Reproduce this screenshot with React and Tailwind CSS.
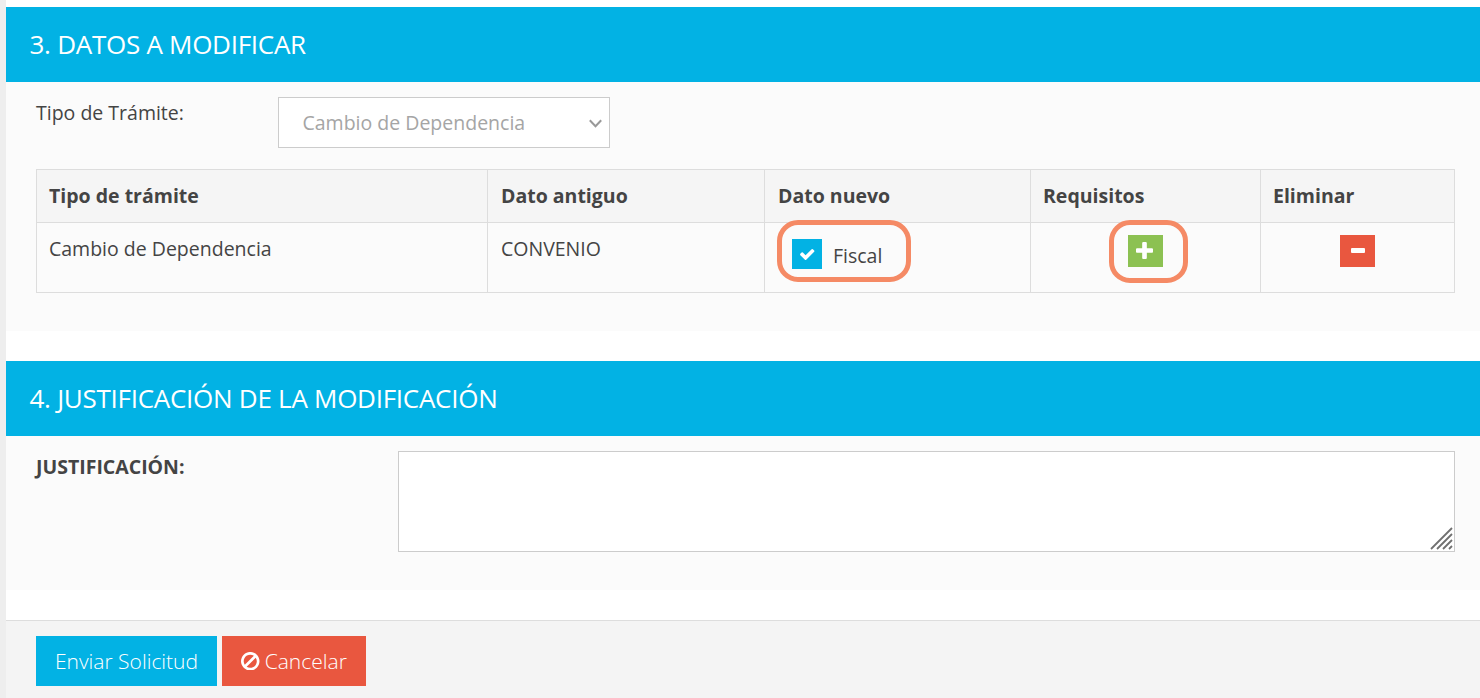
import React from "react";

function CheckIcon() {
  return (
    <svg className="h-[11px] w-[14.5px]" viewBox="121 334 1550 1188" fill="currentColor">
      <path d="M1671 566q0 40-28 68l-724 724-136 136q-28 28-68 28t-68-28l-136-136-362-362q-28-28-28-68t28-68l136-136q28-28 68-28t68 28l294 295 656-657q28-28 68-28t68 28l136 136q28 28 28 68z" />
    </svg>
  );
}

function PlusIcon() {
  return (
    <svg className="size-[17px]" viewBox="192 128 1408 1408" fill="currentColor">
      <path d="M1600 736v192q0 40-28 68t-68 28h-416v416q0 40-28 68t-68 28h-192q-40 0-68-28t-28-68v-416h-416q-40 0-68-28t-28-68v-192q0-40 28-68t68-28h416v-416q0-40 28-68t68-28h192q40 0 68 28t28 68v416h416q40 0 68 28t28 68z" />
    </svg>
  );
}

function MinusIcon() {
  return (
    <svg className="h-[5px] w-3.5" viewBox="0 0 14 5" fill="currentColor">
      <rect width="14" height="5" rx="1" />
    </svg>
  );
}

function BanIcon() {
  return (
    <svg className="size-[18.5px]" viewBox="208 125 1536 1536" fill="currentColor">
      <path d="M1520 893q0-161-87-295l-754 753q137 89 297 89 111 0 211.5-43.5t173.5-116.5 116-174.5 43-212.5zm-999 299l755-754q-135-91-300-91-148 0-273 73t-198 199-73 274q0 162 89 299zm1223-299q0 157-61 300t-163.5 246-245 164-298.5 61-298.5-61-245-164-163.5-246-61-300 61-299.5 163.5-245.5 245-164 298.5-61 298.5 61 245 164 163.5 245.5 61 299.5z" />
    </svg>
  );
}

function SectionHeader({ children }) {
  return (
    <h2 className="flex h-[75px] items-center bg-[#02b2e4] pb-0.5 pl-[23.5px] text-[26px] tracking-[-0.27px] text-white">
      {children}
    </h2>
  );
}

const headings = [
  { label: "Tipo de trámite", padding: "pl-3" },
  { label: "Dato antiguo", padding: "pl-[13px]" },
  { label: "Dato nuevo", padding: "pl-[13px]" },
  { label: "Requisitos", padding: "pl-3" },
  { label: "Eliminar", padding: "pl-3" },
];

export default function App() {
  return (
    <div className="h-[698px] overflow-hidden border-l-[6px] border-[#eeeeee] bg-white pt-[7px] font-['Open_Sans',sans-serif] text-[19.5px] leading-[28px] text-[#444444]">
      <section className="h-[324px] bg-[#fbfbfb]">
        <SectionHeader>3. DATOS A MODIFICAR</SectionHeader>
        <div className="pt-[15px] pr-[25px] pl-[30px]">
          <div className="flex">
            <label className="w-[242px] pt-0.5">Tipo de Trámite:</label>
            <div className="flex h-[51px] w-[332px] items-center justify-between border border-[#cccccc] bg-white pr-[7px] pl-[23.5px] text-[#a5a5a5]">
              <span>Cambio de Dependencia</span>
              <svg className="mt-0.5 h-[9px] w-[13px]" viewBox="0 0 13 9" fill="none" stroke="#999999" strokeWidth="2">
                <path d="M.8 1.2 6.5 7.2 12.2 1.2" />
              </svg>
            </div>
          </div>
          <table className="mt-[21px] w-[1419px] table-fixed border-collapse">
            <colgroup>
              <col className="w-[451px]" />
              <col className="w-[277px]" />
              <col className="w-[266px]" />
              <col className="w-[230px]" />
              <col className="w-[194px]" />
            </colgroup>
            <thead>
              <tr className="h-[53px] bg-[#f5f5f5] text-left">
                {headings.map(({ label, padding }) => (
                  <th key={label} className={`border border-[#dddddd] py-0 font-bold ${padding}`}>
                    {label}
                  </th>
                ))}
              </tr>
            </thead>
            <tbody>
              <tr className="h-[70px] align-top">
                <td className="border border-[#dddddd] px-3 pt-3">Cambio de Dependencia</td>
                <td className="border border-[#dddddd] pt-3 pl-[13px]">CONVENIO</td>
                <td className="relative border border-[#dddddd] pt-4 pl-[27px]">
                  <div className="flex h-[30px] items-center gap-[11px]">
                    <span className="flex size-[30px] items-center justify-center bg-[#02b2e4] pt-px pl-px text-white">
                      <CheckIcon />
                    </span>
                    <span className="pt-1">Fiscal</span>
                  </div>
                  <span className="absolute -top-[3px] left-3 h-[62px] w-[134px] rounded-[21px] border-[5px] border-[#f58a65]" />
                </td>
                <td className="relative border border-[#dddddd] pt-3">
                  <button className="mx-auto flex h-8 w-[35px] items-center justify-center bg-[#8cc152] pr-0.5 pb-px text-white">
                    <PlusIcon />
                  </button>
                  <span className="absolute -top-[3px] left-[78px] h-[63px] w-[79px] rounded-[21px] border-[5px] border-[#f58a65]" />
                </td>
                <td className="border border-[#dddddd] pt-3">
                  <button className="mx-auto flex h-8 w-[35px] items-center justify-center bg-[#e9573f] pb-px text-white">
                    <MinusIcon />
                  </button>
                </td>
              </tr>
            </tbody>
          </table>
        </div>
      </section>

      <section className="mt-[30px] h-[229px] bg-[#fbfbfb]">
        <SectionHeader>4. JUSTIFICACIÓN DE LA MODIFICACIÓN</SectionHeader>
        <div className="flex pt-[15px] pr-[25px] pl-[30px]">
          <label className="w-[362px] pt-0.5 font-bold">JUSTIFICACIÓN:</label>
          <div className="relative h-[101px] w-[1057px] border border-[#cccccc] bg-white">
            <textarea className="block size-full resize-none px-3 py-2 outline-none" />
            <svg className="absolute right-[1px] bottom-[1px] size-[23px]" viewBox="0 0 23 23" stroke="#707070" strokeWidth="1.8">
              <path d="M1 22 22 1M7 22 22 7M13 22 22 13M19 22 22 19" />
            </svg>
          </div>
        </div>
      </section>

      <footer className="mt-[30px] flex h-[78px] gap-[5px] border-t border-[#dddddd] bg-[#f4f4f4] pt-[15px] pl-[30px] text-[21px] font-light text-white">
        <button className="flex h-[50px] w-[181px] items-center justify-center bg-[#02b2e4]">Enviar Solicitud</button>
        <button className="flex h-[50px] w-36 items-center justify-center gap-[5px] bg-[#e9573f]">
          <BanIcon />
          Cancelar
        </button>
      </footer>
    </div>
  );
}
